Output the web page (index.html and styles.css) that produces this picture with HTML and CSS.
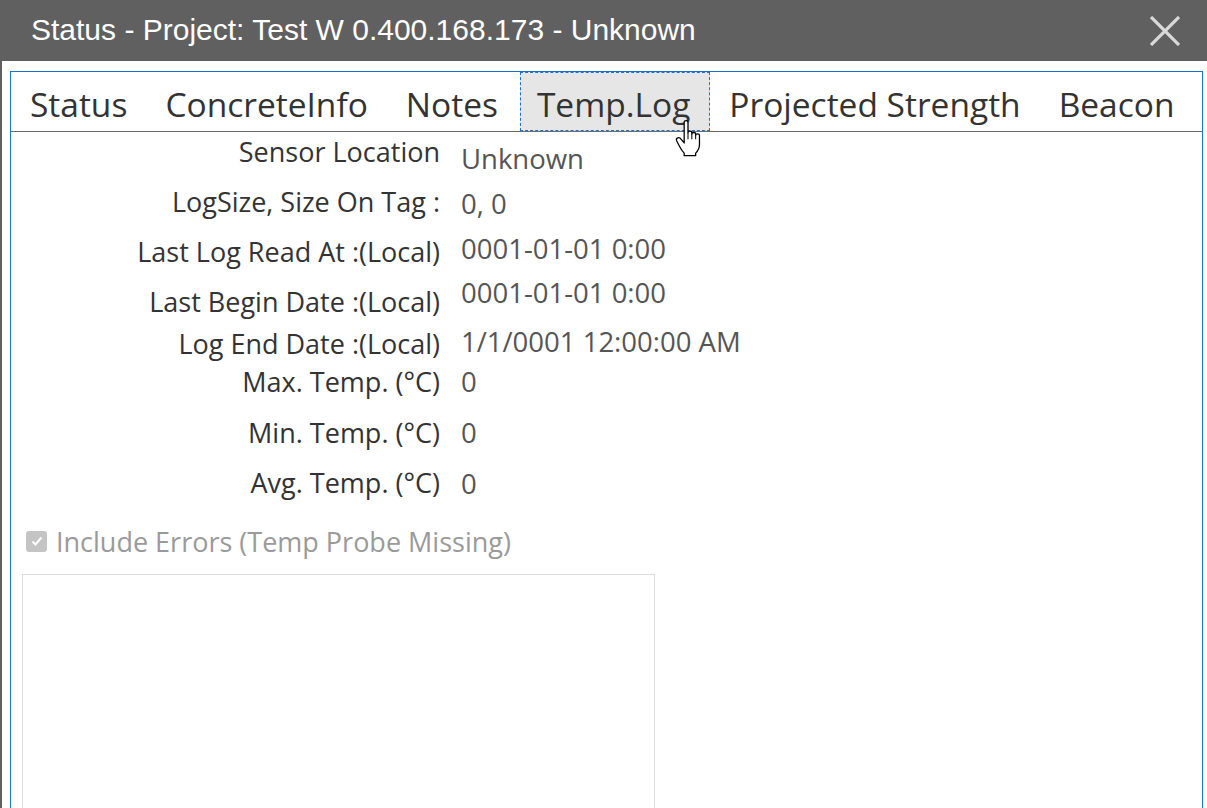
FILE: index.html
```html
<!DOCTYPE html>
<html lang="en">
<head>
<meta charset="utf-8">
<title>Status - Project</title>
<link rel="stylesheet" href="styles.css">
</head>
<body>
<div class="window">
  <header class="titlebar">
    <h1 class="title">Status - Project: Test W 0.400.168.173 - Unknown</h1>
    <button class="close" aria-label="Close">
      <svg width="30" height="30" viewBox="0 0 30 30"><path d="M1 1L29 29M29 1L1 29" stroke="#d9d9d9" stroke-width="3.2" fill="none"/></svg>
    </button>
  </header>
  <main class="content">
    <section class="frame">
      <nav class="tabs">
        <span class="tab">Status</span>
        <span class="tab">ConcreteInfo</span>
        <span class="tab">Notes</span>
        <span class="tab active">Temp.Log</span>
        <span class="tab">Projected Strength</span>
        <span class="tab">Beacon</span>
      </nav>
      <div class="panel">
        <div class="row r1"><span class="label">Sensor Location</span><span class="value o7">Unknown</span></div>
        <div class="row r2"><span class="label">LogSize, Size On Tag :</span><span class="value o2">0, 0</span></div>
        <div class="row r3"><span class="label">Last Log Read At :(Local)</span><span class="value om3">0001-01-01 0:00</span></div>
        <div class="row r4"><span class="label">Last Begin Date :(Local)</span><span class="value om9">0001-01-01 0:00</span></div>
        <div class="row r5"><span class="label">Log End Date :(Local)</span><span class="value om2">1/1/0001 12:00:00 AM</span></div>
        <div class="row r6"><span class="label">Max. Temp. (°C)</span><span class="value">0</span></div>
        <div class="row r7"><span class="label">Min. Temp. (°C)</span><span class="value">0</span></div>
        <div class="row r8"><span class="label">Avg. Temp. (°C)</span><span class="value o1">0</span></div>
        <label class="check">
          <span class="box"><svg width="14" height="14" viewBox="0 0 14 14"><path d="M2.5 7.5L5.5 10.5L11.5 3.5" stroke="#fff" stroke-width="2" fill="none"/></svg></span>
          <span class="check-text">Include Errors (Temp Probe Missing)</span>
        </label>
        <div class="chart"></div>
      </div>
    </section>
  </main>
  <svg class="cursor" width="26" height="37" viewBox="0 0 20 29">
    <path d="M7 2Q7 0.5 8.5 0.5Q10 0.5 10 2V10Q10 8.8 11.5 8.8Q13 8.8 13 10V11Q13 9.8 14.5 9.8Q16 9.8 16 11V12Q16 10.8 17.5 10.8Q19 10.8 19 12V19Q19 23 16 26V28H7V26Q5 24 3 20L1 16Q0.5 14.5 2 14Q3.5 13.5 4.5 15L7 18Z" fill="#fff" stroke="#000" stroke-width="1" stroke-linejoin="round"/>
    <path d="M10 10V15M13 11V15M16 12V15" stroke="#000" stroke-width="0.8" fill="none"/>
  </svg>
</div>
</body>
</html>
```
FILE: styles.css
```css
* { box-sizing: border-box; }
html, body {
  margin: 0;
  padding: 0;
  background: #fff;
}
body {
  width: 1207px;
  height: 808px;
  overflow: hidden;
}
.window {
  position: relative;
  height: 808px;
  border-left: 2px solid #606060;
  display: flex;
  flex-direction: column;
  overflow: hidden;
}
.titlebar {
  flex: 0 0 61px;
  height: 61px;
  background: #606060;
  display: flex;
  align-items: center;
  justify-content: space-between;
  padding: 0 27px 2px 31px;
  margin-left: -2px;
}
.title {
  margin: 0;
  font: 400 30px/1 "Liberation Sans", Arial, sans-serif;
  color: #fff;
  white-space: nowrap;
}
.close {
  border: 0;
  background: none;
  padding: 0;
  width: 30px;
  height: 30px;
  margin-top: 2px;
  display: flex;
}
.content {
  flex: 1 1 auto;
  min-height: 0;
  padding: 10px 4px 0 8px;
  display: flex;
  flex-direction: column;
}
.frame {
  flex: 1 1 auto;
  min-height: 0;
  border: 1px solid #1b72d1;
  border-bottom: 0;
  font-family: "Open Sans", "Noto Sans", sans-serif;
  color: #333;
}
.tabs {
  display: flex;
  height: 60px;
  border-bottom: 1px solid #6b6b6b;
}
.tab {
  padding: 6px 19px 0;
  height: 59px;
  font-size: 33.5px;
  line-height: 53px;
  white-space: nowrap;
  color: #333;
}
.tab.active {
  background: #e6e6e6;
  border: 1px dashed #1b72d1;
  padding: 5px 19px 0 16px;
  margin-left: 3px;
}
.panel {
  padding: 2px 0 0 0;
}
.row {
  display: flex;
  align-items: flex-start;
}
.r1, .r2, .r3 { height: 50px; }
.r4 { height: 42px; }
.r5 { height: 38px; }
.r6 { height: 51px; }
.r7 { height: 50px; }
.r8 { height: 36px; }
.label {
  width: 429px;
  text-align: right;
  font-size: 27px;
  line-height: 36px;
  color: #333;
  white-space: nowrap;
}
.value {
  margin-left: 21px;
  font-size: 27.5px;
  line-height: 36px;
  color: #555;
  white-space: nowrap;
}
.o7 { margin-top: 7px; }
.o2 { margin-top: 2px; }
.o1 { margin-top: 1px; }
.om2 { margin-top: -2px; }
.om3 { margin-top: -3px; }
.om9 { margin-top: -9px; }
.check {
  display: flex;
  align-items: center;
  gap: 9px;
  margin: 23px 0 0 15px;
  height: 36px;
}
.box {
  width: 21px;
  height: 21px;
  border-radius: 3px;
  background: #c4c4c4;
  display: flex;
  align-items: center;
  justify-content: center;
  margin-top: -2px;
}
.check-text {
  font-size: 27px;
  line-height: 36px;
  color: #9a9a9a;
}
.chart {
  margin: 14px 0 0 11px;
  width: 633px;
  height: 300px;
  border: 1px solid #dcdcdc;
}
.cursor {
  position: absolute;
  left: 673px;
  top: 120px;
}
```
